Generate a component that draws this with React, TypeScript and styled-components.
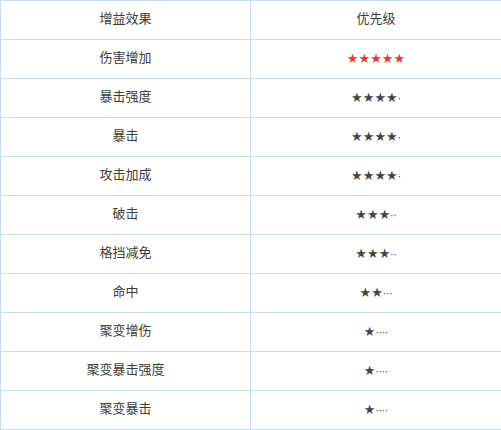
import * as React from 'react';
import styled, { createGlobalStyle } from 'styled-components';

type Row = {
  name: string;
  stars: number;
};

const rows: Row[] = [
  { name: '伤害增加', stars: 5 },
  { name: '暴击强度', stars: 4 },
  { name: '暴击', stars: 4 },
  { name: '攻击加成', stars: 4 },
  { name: '破击', stars: 3 },
  { name: '格挡减免', stars: 3 },
  { name: '命中', stars: 2 },
  { name: '聚变增伤', stars: 1 },
  { name: '聚变暴击强度', stars: 1 },
  { name: '聚变暴击', stars: 1 },
];

const GlobalStyle = createGlobalStyle`
  html, body {
    margin: 0;
    padding: 0;
    background: #fff;
  }
`;

const Table = styled.table`
  width: 501px;
  border-collapse: collapse;
  table-layout: fixed;
  font-family: 'Liberation Sans', 'Noto Sans CJK SC', sans-serif;
  font-size: 13px;
  color: #3c3c3c;
`;

const Cell = styled.td<{ $text?: boolean }>`
  height: 39px;
  padding: ${(p) => (p.$text ? '0 0 3px' : '0 0 1px')};
  box-sizing: border-box;
  border: 1px solid #c5dbf7;
  text-align: center;
  vertical-align: middle;
  line-height: 1;
`;

const Stars = styled.span<{ $top?: boolean }>`
  font-family: 'DejaVu Sans', sans-serif;
  font-size: 13px;
  color: ${(p) => (p.$top ? '#e53935' : '#444')};
`;

const Dots = styled.span`
  font-size: 10px;
`;

const App = () => {
  return (
    <>
      <GlobalStyle />
      <Table>
        <colgroup>
          <col style={{ width: 250 }} />
          <col style={{ width: 251 }} />
        </colgroup>
        <tbody>
          <tr>
            <Cell $text>增益效果</Cell>
            <Cell $text>优先级</Cell>
          </tr>
          {rows.map((r) => (
            <tr key={r.name}>
              <Cell $text>{r.name}</Cell>
              <Cell>
                <Stars $top={r.stars === 5}>
                  {'★'.repeat(r.stars)}
                  <Dots>{'·'.repeat(5 - r.stars)}</Dots>
                </Stars>
              </Cell>
            </tr>
          ))}
        </tbody>
      </Table>
    </>
  );
};

export default App;
